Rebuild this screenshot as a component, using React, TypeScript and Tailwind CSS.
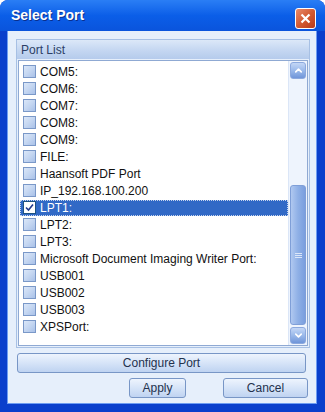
import { ChevronUp, ChevronDown } from 'lucide-react'

const ports = [
  'COM5:',
  'COM6:',
  'COM7:',
  'COM8:',
  'COM9:',
  'FILE:',
  'Haansoft PDF Port',
  'IP_192.168.100.200',
  'LPT1:',
  'LPT2:',
  'LPT3:',
  'Microsoft Document Imaging Writer Port:',
  'USB001',
  'USB002',
  'USB003',
  'XPSPort:',
]

const selected = 'LPT1:'

function Checkbox({ checked }: { checked?: boolean }) {
  if (checked) {
    return (
      <span className="w-[13px] h-[13px] border border-[#1c5180] bg-white flex items-center justify-center shrink-0">
        <svg width="9" height="9" viewBox="0 0 9 9">
          <path d="M1 4.5 L3.5 7 L8 1.5" stroke="#21398c" strokeWidth="1.6" fill="none" />
        </svg>
      </span>
    )
  }
  return (
    <span className="w-[13px] h-[13px] border border-[#7a98c8] bg-gradient-to-br from-[#dbe7f8] via-[#c4d6f1] to-[#a9c1e8] shrink-0" />
  )
}

function ScrollButton({ down }: { down?: boolean }) {
  return (
    <div className="h-[17px] rounded-[3px] border border-[#8ca9de] bg-gradient-to-b from-[#c4d7f6] via-[#9ab9ea] to-[#6f95d9] flex items-center justify-center">
      {down ? (
        <ChevronDown size={11} strokeWidth={3.5} color="#ffffff" />
      ) : (
        <ChevronUp size={11} strokeWidth={3.5} color="#ffffff" />
      )}
    </div>
  )
}

function XpButton({ label, className }: { label: string; className?: string }) {
  return (
    <button className={`h-[20px] rounded-[3px] border border-[#7896c6] bg-gradient-to-b from-[#eef4fd] via-[#d6e4f8] to-[#bfd3f1] text-[12px] text-[#24324d] ${className ?? ''}`}>
      {label}
    </button>
  )
}

export default function App() {
  return (
    <div
      className="w-[325px] h-[412px] flex flex-col bg-[#0a3fcc] rounded-t-[8px] overflow-hidden"
      style={{ fontFamily: '"Liberation Sans", Arial, sans-serif' }}
    >
      <div className="h-[31px] shrink-0 flex items-center justify-between pl-[11px] pr-[9px] bg-gradient-to-b from-[#2a7ef5] via-[#0b5ee8] to-[#0a54dc]">
        <span className="text-white font-bold text-[14px] [text-shadow:1px_1px_0_#0a2f8c]">Select Port</span>
        <div className="w-[21px] h-[21px] mt-[5px] rounded-[3px] border border-white bg-gradient-to-br from-[#e88a6a] via-[#d35a32] to-[#b8391a] flex items-center justify-center">
          <svg width="11" height="11" viewBox="0 0 11 11">
            <path d="M1.5 1.5 L9.5 9.5 M9.5 1.5 L1.5 9.5" stroke="#ffffff" strokeWidth="2.2" />
          </svg>
        </div>
      </div>

      <div className="flex-1 flex px-[7px] pb-[8px] pr-[8px]">
        <div className="flex-1 flex flex-col bg-[#e6effb] border-l border-r border-b border-[#6d9cf2] pt-[8px] pl-[8px] pr-[6px]">
          <div className="flex flex-col border border-[#a7c0e4]">
            <div className="h-[19px] flex items-center pl-[4px] text-[12px] text-[#2c3f66] bg-gradient-to-b from-[#dce8f8] via-[#c6d8f2] to-[#b5cbec]">
              Port List
            </div>
            <div className="flex border border-[#8fa9d3] bg-white h-[286px] m-[1px]">
              <div className="flex-1 flex flex-col pt-[2px] pl-[1px]">
                {ports.map((p) => {
                  const isSel = p === selected
                  return (
                    <div key={p} className="h-[17px] flex items-center">
                      <div
                        className={`h-[16px] flex-1 flex items-center pl-[3px] ${
                          isSel ? 'bg-[#3169c6] outline-1 outline-dotted outline-[#c8d6ee] -outline-offset-1' : ''
                        }`}
                      >
                        <Checkbox checked={isSel} />
                        <span className={`ml-[4px] text-[12px] ${isSel ? 'text-white' : 'text-[#111]'}`}>{p}</span>
                      </div>
                    </div>
                  )
                })}
              </div>
              <div className="w-[19px] flex flex-col bg-[#eef4fd] border-l border-[#dbe6f7] p-[1px]">
                <ScrollButton />
                <div className="flex-1 flex flex-col pt-[106px] pb-[2px]">
                  <div className="flex-1 rounded-[3px] border border-[#7f9fd8] bg-gradient-to-r from-[#b0c8f0] via-[#8fb0e6] to-[#7a9ede] flex items-center justify-center">
                    <div className="flex flex-col gap-[1px]">
                      <span className="w-[7px] h-[1px] bg-[#dbe6f8]" />
                      <span className="w-[7px] h-[1px] bg-[#dbe6f8]" />
                      <span className="w-[7px] h-[1px] bg-[#dbe6f8]" />
                    </div>
                  </div>
                </div>
                <ScrollButton down />
              </div>
            </div>
          </div>
          <XpButton label="Configure Port" className="mt-[5px] ml-[1px] mr-[4px]" />
          <div className="flex justify-end gap-[37px] mt-[5px] mr-[2px]">
            <XpButton label="Apply" className="w-[57px]" />
            <XpButton label="Cancel" className="w-[85px]" />
          </div>
        </div>
      </div>
    </div>
  )
}
